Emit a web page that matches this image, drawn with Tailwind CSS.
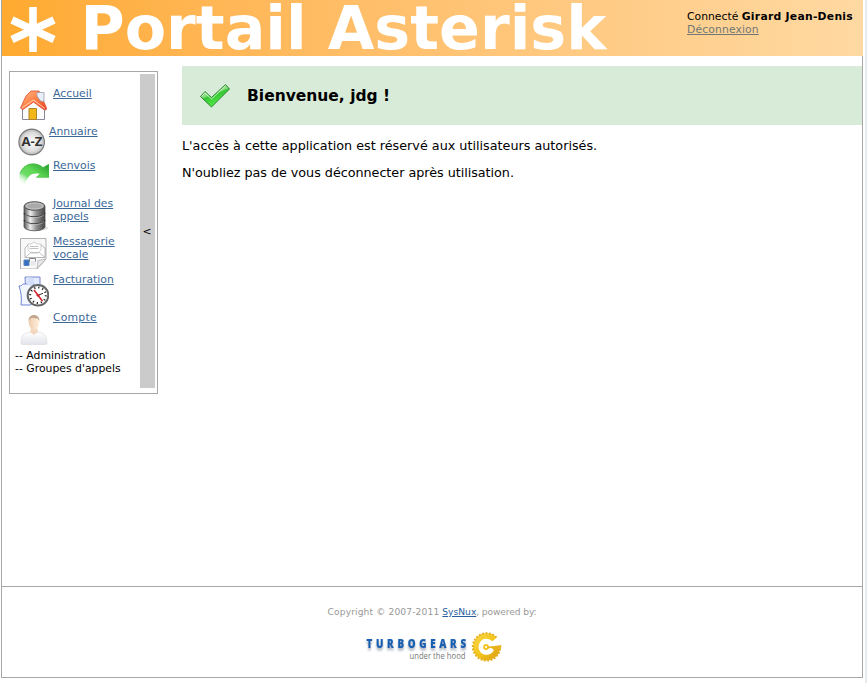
<!DOCTYPE html>
<html lang="fr">
<head>
<meta charset="utf-8">
<title>Portail Asterisk</title>
<script src="https://cdn.jsdelivr.net/npm/@tailwindcss/browser@4"></script>
</head>
<body class="w-[867px] h-[683px] overflow-hidden bg-white pl-px font-['DejaVu_Sans',sans-serif] text-black">
<div class="flex h-[683px] justify-between">
<div class="flex h-[678px] w-[862px] flex-col border-x border-b border-[#a7a7a7]">
  <header class="-mr-px flex h-14 shrink-0 justify-between bg-linear-to-r from-[#ffaa2f] to-[#ffd9a2] pr-[9px]">
    <div class="flex">
      <svg class="ml-2 mt-[7px] h-[46px] w-[46px] shrink-0" viewBox="0 0 46 46" fill="none" stroke="#fff" stroke-width="7.6"><path d="M23 0V45M2 13L44 32.5M44 13L2 32.5"/></svg>
      <h1 class="ml-[24.5px] h-14 whitespace-nowrap text-[60.3px] font-bold leading-[56px] text-white">Portail Asterisk</h1>
    </div>
    <div class="mt-[10px] w-[167px] whitespace-nowrap text-[10.8px] leading-[13px]">
      <div>Connecté <b class="tracking-[0.26px]">Girard Jean-Denis</b></div>
      <a class="tracking-[0.12px] text-[#6f7876] underline">Déconnexion</a>
    </div>
  </header>
  <div class="flex grow">
    <nav class="ml-[7px] mt-[15px] flex h-[323px] w-[149px] shrink-0 justify-between border border-[#a7a7a7] pt-[2px] pr-[2px]">
      <div class="w-[126px] pt-[13px] pl-[5px] text-[10.85px] leading-[13px] text-[#3b6797]">
        <div class="flex h-[38px] gap-1 pl-[2px]">
          <svg class="mt-[2px] h-8 w-8 shrink-0" viewBox="0 0 32 32">
            <defs><linearGradient id="roof" x1="0" y1="0" x2="1" y2="1"><stop stop-color="#ffb98a"/><stop offset=".5" stop-color="#ff8246"/><stop offset="1" stop-color="#e93e20"/></linearGradient></defs>
            <path d="M5.500 18L16 10l11.500 9v11.500h-22z" fill="#fcfcfc" stroke="#8d879c"/>
            <path d="M12 19.500h7.500v11H12z" fill="#f2b616" stroke="#ad852d"/>
            <path d="M3.500 19L9 7l5-5h8l7.500 17-.5 2-3-1-9.500-7L6 20.500z" fill="url(#roof)" stroke="#de492d" stroke-width=".8"/>
            <path d="M5 19L16 11.300h1L28 19.500" fill="none" stroke="#ffe9d5" stroke-width=".8"/>
            <path d="M20 3.500h7v9l-3.500-.5-3.500-5z" fill="#e9f0f9" stroke="#9e9daa" stroke-width=".8"/>
          </svg><a class="underline">Accueil</a></div>
        <div class="flex h-[34px] gap-1 pl-[2px]">
          <svg class="mt-[3px] h-7 w-7 shrink-0" viewBox="0 0 28 28">
            <defs><radialGradient id="disc"><stop stop-color="#fff"/><stop offset=".72" stop-color="#ddd"/><stop offset="1" stop-color="#c0c0c0"/></radialGradient></defs>
            <circle cx="14.700" cy="14" r="12.700" fill="url(#disc)" stroke="#808080" stroke-width="1.400"/><circle cx="14.700" cy="14" r="11.500" fill="none" stroke="#c4c4c4"/>
            <text x="14.900" y="18.200" text-anchor="middle" font-family="Open Sans, sans-serif" font-size="11.500" font-weight="700" textLength="21" lengthAdjust="spacingAndGlyphs" fill="#333">A-Z</text>
          </svg><a class="underline">Annuaire</a></div>
        <div class="flex h-[38px] gap-1 pl-[2px]">
          <svg class="mt-[2px] h-8 w-8 shrink-0" viewBox="0 0 32 32">
            <defs><linearGradient id="arrow" gradientUnits="userSpaceOnUse" x1="26" y1="2" x2="9" y2="27"><stop stop-color="#2da534"/><stop offset=".4" stop-color="#5fd855"/><stop offset=".65" stop-color="#6cdb68"/><stop offset="1" stop-color="#fff" stop-opacity="0"/></linearGradient></defs>
            <path d="M7 28C1 23 1 13 5 8 10 1 20 1 26 6.500l6-3.500v13.500H19l4-3.500c-4-1-8-.5-10.500 2-4 4-4 9-5.500 13z" fill="url(#arrow)"/><path d="M3 13C5 5 17-1 26 6.500l5.700-3v12.800H19.500l3.500-3.300" fill="none" stroke="#45b944" stroke-width=".6"/>
          </svg><a class="underline">Renvois</a></div>
        <div class="flex h-[38px] gap-1 pl-[2px]">
          <svg class="mt-[3px] h-8 w-8 shrink-0" viewBox="0 0 32 32">
            <defs><linearGradient id="steel"><stop stop-color="#555"/><stop offset=".3" stop-color="#eee"/><stop offset=".6" stop-color="#8d8d8d"/><stop offset="1" stop-color="#444"/></linearGradient></defs>
            <ellipse cx="19" cy="28" rx="12" ry="3" fill="#ddd"/>
            <path d="M7 6v21c2 5 19 5 21 0V6z" fill="url(#steel)" stroke="#555" stroke-width=".8"/>
            <path d="M7 13c2 5 19 5 21 0M7 20c2 5 19 5 21 0" fill="none" stroke="#333" stroke-width="1.200"/><path d="M8 14.500c3 4 16 4 19 0M8 21.500c3 4 16 4 19 0" fill="none" stroke="#ccc" stroke-width=".7"/>
            <ellipse cx="17.500" cy="6" rx="10.300" ry="4.300" fill="#999" stroke="#555"/><ellipse cx="17.500" cy="6" rx="8.500" ry="3" fill="#aaa" stroke="#ddd" stroke-width=".6"/>
          </svg><a class="underline">Journal des appels</a></div>
        <div class="flex h-[38px] gap-1 pl-[2px]">
          <svg class="mt-[2px] h-8 w-8 shrink-0" viewBox="0 0 32 32">
            <path d="M3.500 1.500h25.500v20.500l-9 10H3.500z" fill="#f8f8f8" stroke="#b0b0b0"/>
            <path d="M8 11l3-3h13l4 3v9.500H8z" fill="#fff" stroke="#a5a5a5" stroke-width=".8"/><path d="M11 13V7h3l3-2 3 2h4v6l-3 3h-7z" fill="#fff" stroke="#bbb" stroke-width=".7"/><path d="M12.500 9.500h9M12.500 11.500h9M8 20.500l6-5h8l6 5" fill="none" stroke="#b4b4b4" stroke-width=".8"/>
            <path d="M7 23h5v5.500H7z" fill="#376fc0" stroke="#5682c1"/><path d="M13.500 24h5v4.500h-5z" fill="#e6e9ee"/><path d="M12.500 25v-3.500h6v3" fill="none" stroke="#777" stroke-width=".9"/><path d="M29 22l-9 9.500 1-8z" fill="#e8e8e8" stroke="#aaa" stroke-width=".7"/>
          </svg><a class="underline">Messagerie vocale</a></div>
        <div class="flex h-[38px] gap-1 pl-[2px]">
          <svg class="mt-[2px] h-8 w-8 shrink-0" viewBox="0 0 32 32">
            <path d="M8 2h15v20H9z" fill="#e2ebff" stroke="#7686d0"/><path d="M2 11c3 0 3-1 4-2h11l-3 21H4c1-7 0-13-2-19z" fill="#f2f6ff" stroke="#7286d5"/>
            <path d="M9 9c2 0 2-5 1-7l7 1-1 9z" fill="#d4dff9"/>
            <circle cx="21" cy="20.300" r="10.300" fill="#fff" stroke="#666" stroke-width="2"/><circle cx="21" cy="20.300" r="7.800" fill="none" stroke="#222" stroke-width="2" stroke-dasharray="1.200 2.884"/>
            <path d="M21 20.300L17 15M21 20.300l4.500 6" stroke="#d52332" stroke-width="1.500"/><path d="M21 20.300l5-2" stroke="#333"/><circle cx="21" cy="20.300" r="1.400" fill="#d52332"/>
          </svg><a class="underline">Facturation</a></div>
        <div class="flex h-[38px] gap-1 pl-[2px]">
          <svg class="mt-[2px] h-8 w-8 shrink-0" viewBox="0 0 32 32">
            <defs><linearGradient id="shirt" x2="0" y2="1"><stop stop-color="#fff"/><stop offset="1" stop-color="#dfe2e9"/></linearGradient><linearGradient id="skin"><stop stop-color="#f0cdae"/><stop offset="1" stop-color="#fff1df"/></linearGradient></defs>
            <path d="M4 31c0-8 2-11 9-12h8c7 1 9 4 9 12-5 2-21 2-26 0z" fill="url(#shirt)" stroke="#ddd" stroke-width=".7"/>
            <path d="M14 15h6l1 4-4 3-4-3z" fill="#f3d8c0"/><ellipse cx="17" cy="9.500" rx="5.300" ry="7.500" fill="url(#skin)"/><path d="M11.500 8c0-8 11-8 11 0l-2-2.500c-3 0-5-1-7 0z" fill="#c3a68f"/>
          </svg><a class="tracking-[0.2px] underline">Compte</a></div>
        <div class="whitespace-nowrap text-black">-- Administration<br>-- Groupes d'appels</div>
      </div>
      <button class="h-[314px] w-[15px] bg-[#cbcbcb] pr-px text-[10.8px] leading-[13px]">&lt;</button>
    </nav>
    <main class="ml-6 mt-[10px] grow text-[12.77px] leading-4">
      <div class="flex h-[59px] items-center bg-[#d8ebd8] pl-[17px]">
        <svg class="h-8 w-8 shrink-0" viewBox="0 0 32 32">
          <defs><linearGradient id="tick" x1="0" y1="0" x2=".5" y2="1"><stop stop-color="#b6f3af"/><stop offset=".5" stop-color="#83da7b"/><stop offset=".55" stop-color="#35c632"/><stop offset="1" stop-color="#55ef47"/></linearGradient></defs>
          <path d="M1.500 16.500l4.500-5 6.500 6L26.500 4.500l4 4.500L12.500 27z" fill="url(#tick)" stroke="#267b2b" stroke-width=".9"/><path d="M3 16l3-3 6.500 6L26.500 6" fill="none" stroke="#d9ffd2" stroke-width=".8"/>
        </svg>
        <h2 class="ml-4 text-[15.5px] font-bold leading-5">Bienvenue, jdg !</h2>
      </div>
      <p class="mt-[13px]">L'accès à cette application est réservé aux utilisateurs autorisés.</p>
      <p class="mt-[11px] tracking-[-0.035px]">N'oubliez pas de vous déconnecter après utilisation.</p>
    </main>
  </div>
  <footer class="flex h-[91px] shrink-0 flex-col items-center border-t border-[#a7a7a7] pt-[19px]">
    <p class="text-[9.15px] leading-[13px] text-[#999]"><span class="tracking-[0.12px]">Copyright © 2007-2011 </span><a class="text-[#2a5d9b] underline">SysNux</a><span class="tracking-[-0.12px]">, powered by:</span></p>
    <svg class="mt-[6px] ml-[5px] h-[45px] w-[150px]" viewBox="360 625 150 45">
      <defs><linearGradient id="gold" gradientUnits="userSpaceOnUse" x1="474" y1="634" x2="500" y2="660"><stop stop-color="#f8d547"/><stop offset=".5" stop-color="#f3c51c"/><stop offset="1" stop-color="#d99a10"/></linearGradient><filter id="soft" x="-10%" y="-30%" width="120%" height="190%"><feDropShadow dx="0" dy="2.500" stdDeviation="1" flood-color="#73808f" flood-opacity=".65"/></filter></defs>
      <text transform="translate(366.500 648) scale(.82 1)" font-family="Open Sans, sans-serif" font-weight="800" font-size="12" textLength="121.500" fill="#1560b2" stroke="#1560b2" stroke-width=".2" filter="url(#soft)">TURBOGEARS</text>
      <text x="409.500" y="659" font-family="Open Sans, sans-serif" font-size="8.600" textLength="56" lengthAdjust="spacingAndGlyphs" fill="#777">under the hood</text>
      <g fill="none" stroke="url(#gold)">
        <path d="M494.500 639.500A10.800 10.800 0 1 0 497.300 647.500" stroke-width="5.500"/>
        <path d="M496.500 637.500A13.700 13.700 0 1 0 500.200 648" stroke-width="2" stroke-dasharray="1.900 1.500" stroke="#e2b024"/>
        <circle cx="486" cy="647" r="2" stroke-width="1.800"/>
        <path d="M488 647.300h6" stroke="#e6b41e" stroke-width="1.800"/>
      </g>
      <path d="M491 646.500l10.500-1.500-1 5h-7z" fill="#e8b21d"/>
    </svg>
  </footer>
</div>
<div class="w-[2px] bg-[#e6ebf2]"></div>
</div>
</body>
</html>
